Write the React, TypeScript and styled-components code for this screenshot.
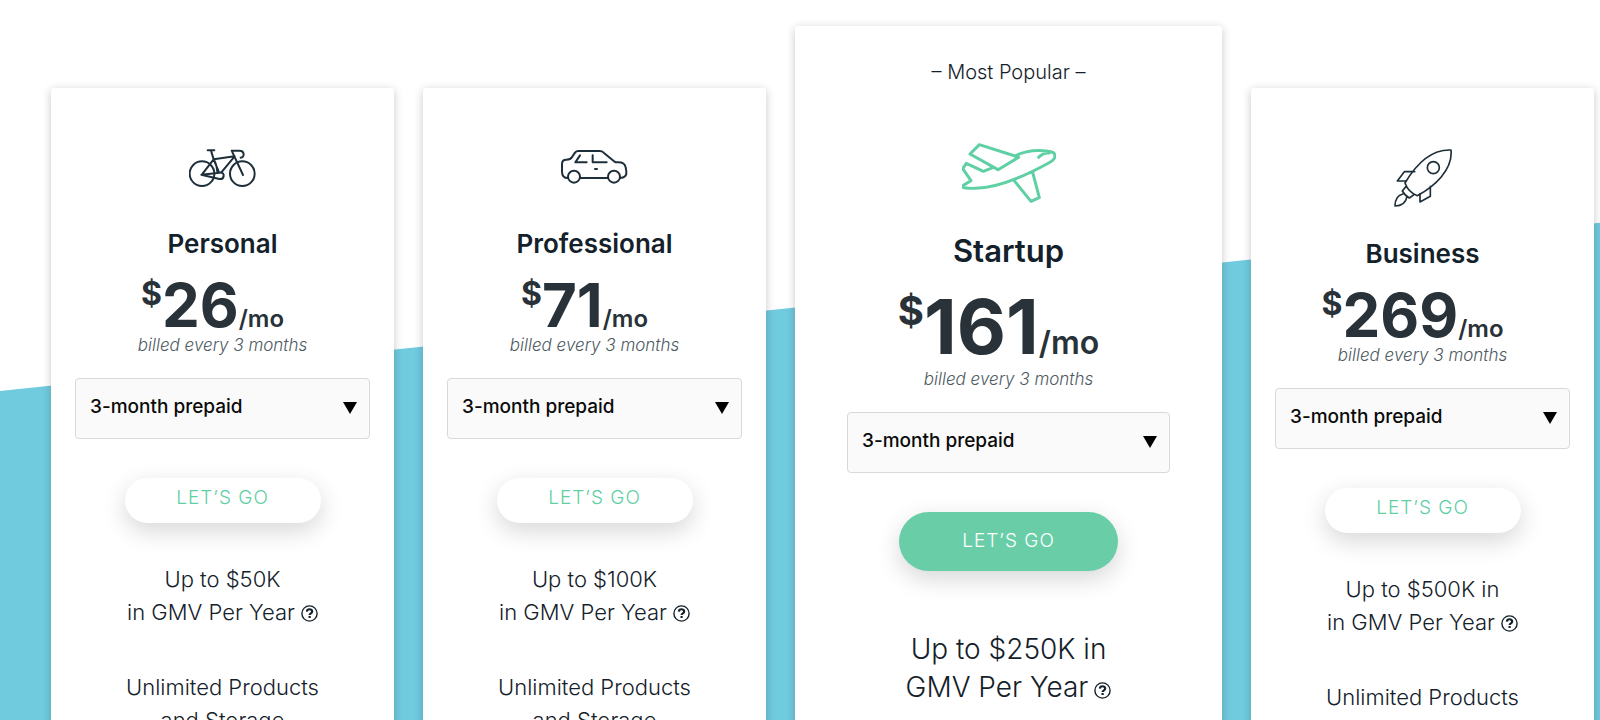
import React from "react";
import styled, { createGlobalStyle } from "styled-components";

const GlobalStyle = createGlobalStyle`
  *, *::before { box-sizing: border-box; }
  body {
    margin: 0;
    background: #fff;
    color: #14212a;
    font-family: Inter, "Open Sans", sans-serif;
  }
`;

const Page = styled.main`
  position: relative;
  height: 100vh;
  overflow: hidden;

  &::before {
    content: "";
    position: absolute;
    z-index: -1;
    top: 391px;
    left: 0;
    right: 0;
    height: 200vh;
    background: #70cbdf;
    transform: skewY(-6deg);
    transform-origin: left top;
  }
`;

const Plans = styled.div`
  display: grid;
  grid-template-columns: 343fr 343fr 427fr 343fr;
  gap: 29px;
  align-items: start;
  padding: 26px 6px 0 51px;
`;

const Card = styled.section<{ $featured?: boolean }>`
  display: flex;
  flex-direction: column;
  align-items: center;
  margin-top: ${(p) => (p.$featured ? 0 : 62)}px;
  padding: ${(p) => (p.$featured ? "32px 52px 60px" : "61px 24px 60px")};
  background: #fff;
  border-radius: 3px;
  box-shadow: 0 2px 10px rgba(0, 0, 0, 0.22);
  text-align: center;
`;

const Badge = styled.p`
  margin: 0 0 57px;
  font-size: 20px;
  font-weight: 300;
  line-height: 28px;
`;

const IconBox = styled.div<{ $height: number }>`
  height: ${(p) => p.$height}px;
  margin-bottom: 31px;

  svg {
    display: block;
    fill: none;
    stroke: #1d2f3a;
    stroke-linecap: round;
    stroke-linejoin: round;
  }
`;

const Title = styled.h2<{ $featured?: boolean }>`
  margin: 0 0 ${(p) => (p.$featured ? 23 : 17)}px;
  font-size: ${(p) => (p.$featured ? 31 : 26)}px;
  font-weight: 600;
  line-height: 32px;
`;

const Price = styled.p<{ $featured?: boolean }>`
  display: flex;
  align-items: baseline;
  margin: 0 0 ${(p) => (p.$featured ? 5 : 0)}px;
  padding-right: 20px;
  color: #283238;
  font-size: ${(p) => (p.$featured ? 76 : 60)}px;
  font-weight: 700;
  line-height: ${(p) => (p.$featured ? 72 : 56)}px;
`;

const Currency = styled.span<{ $featured?: boolean }>`
  align-self: flex-start;
  font-size: ${(p) => (p.$featured ? 40 : 32)}px;
  line-height: ${(p) => (p.$featured ? 42 : 34)}px;
`;

const Period = styled.span<{ $featured?: boolean }>`
  font-size: ${(p) => (p.$featured ? 32 : 24)}px;
  font-weight: 600;
  line-height: 28px;
`;

const Billing = styled.p`
  margin: 0 0 21px;
  color: #4d5a62;
  font-size: 17px;
  font-style: italic;
  font-weight: 300;
  line-height: 24px;
`;

const SelectWrap = styled.div`
  position: relative;
  width: 100%;
  margin-bottom: 39px;

  &::after {
    content: "";
    position: absolute;
    top: 24px;
    right: 13px;
    border: 7px solid transparent;
    border-top: 12px solid #000;
    border-bottom: 0;
    pointer-events: none;
  }
`;

const Select = styled.select`
  display: block;
  width: 100%;
  height: 61px;
  padding: 0 36px 4px 14px;
  appearance: none;
  background: #fafafa;
  border: 1px solid #d9d9d9;
  border-radius: 4px;
  color: #0a0a0a;
  font-family: inherit;
  font-size: 19px;
  font-weight: 500;
`;

const Button = styled.button<{ $featured?: boolean }>`
  width: ${(p) => (p.$featured ? 219 : 196)}px;
  height: ${(p) => (p.$featured ? 59 : 45)}px;
  margin-bottom: ${(p) => (p.$featured ? 59 : 40)}px;
  padding: 0 0 ${(p) => (p.$featured ? 3 : 6)}px;
  background: ${(p) => (p.$featured ? "#69cea8" : "#fff")};
  border: 0;
  border-radius: 30px;
  box-shadow: 0 8px 24px rgba(0, 0, 0, 0.16);
  color: ${(p) => (p.$featured ? "#fff" : "#5fcfa4")};
  font-family: inherit;
  font-size: 19px;
  font-weight: 300;
  letter-spacing: 1px;
`;

const Features = styled.ul<{ $featured?: boolean }>`
  display: grid;
  gap: 42px;
  margin: 0;
  padding: 0;
  list-style: none;
  font-size: ${(p) => (p.$featured ? 28 : 22)}px;
  font-weight: 300;
  line-height: ${(p) => (p.$featured ? 38 : 33)}px;
`;

const Line = styled.span`
  display: flex;
  align-items: center;
  justify-content: center;
  gap: 6px;
`;

const HelpButton = styled.button<{ $featured?: boolean }>`
  display: block;
  padding: ${(p) => (p.$featured ? 6 : 1)}px 0 0;
  background: none;
  border: 0;
  color: inherit;

  svg {
    display: block;
  }
`;

const BikeIcon = () => (
  <svg width="67" height="38" viewBox="567 237 201 114" strokeWidth="6" aria-hidden="true">
    <circle cx="606" cy="311" r="37" />
    <circle cx="727" cy="311" r="37" />
    <path d="M623 241h20M633 242l8 26 16 39M641 268l63-9M704 259l-40 48M606 313l35-45q9 14 11 38M604 314l55-6c9-1 13 4 12 10-1 7-5 10-13 9zM695 242h23c17 0 16 21 4 21M695 242l34 73" />
  </svg>
);

const CarIcon = () => (
  <svg width="67" height="38" viewBox="423 89 201 114" strokeWidth="6" aria-hidden="true">
    <circle cx="462" cy="172" r="18" />
    <circle cx="582" cy="172" r="18" />
    <path d="M444 176c-12 0-18-7-18-19v-23c0-9 5-13 13-13 10 0 14-2 18-9l8-12c3-4 6-5 10-5h64c5 0 8 1 12 5l33 27c4 3 6 2 11 2 12 0 20 5 22 15l2 12c2 13-6 19-19 20M480 176h84M480 108l-14 21h34M518 108v21h42M525 149h6" />
  </svg>
);

const PlaneIcon = () => (
  <svg width="94" height="60" viewBox="546 400 282 180" strokeWidth="9" style={{ stroke: "#5fcfa4" }} aria-hidden="true">
    <path d="M705 439L598 405l-28 28 84 47 62-37-11-4c28-14 65-19 100-14 27 3 26 22 1 35-80 44-160 75-220 76-42 1-45-4-31-12l18-11-25-36 11-16 51 24 30-12M776 443c8-9 18-14 32-13M700 510l53 65 25-11-20-76" />
  </svg>
);

const RocketIcon = () => (
  <svg width="58" height="58" viewBox="522 237 174 174" strokeWidth="5" aria-hidden="true">
    <circle cx="640" cy="293" r="18" />
    <path d="M693 240c-65-3-109 50-138 99 6 17 18 31 37 38 52-28 107-78 101-137zM584 305h-31l-21 28h25M600 371v25l31-17v-30M559 348l-12 15c5 9 12 16 21 21l15-11M549 372c-18 4-24 18-24 36 19 0 32-7 36-28" />
  </svg>
);

const HelpIcon = () => (
  <svg width="17" height="17" viewBox="0 0 17 17" fill="none" stroke="currentColor" aria-hidden="true">
    <circle cx="8.5" cy="8.5" r="7.6" strokeWidth="1.4" />
    <path d="M5.900 6.600c.1-3.100 5.300-3.100 5.300-.1 0 1.900-2.600 1.700-2.600 3.500M8.600 11.100v2" strokeWidth="2.200" />
  </svg>
);

interface Plan {
  id: string;
  name: string;
  price: number;
  icon: React.ReactNode;
  iconHeight: number;
  limit: [string, string];
  featured?: boolean;
}

const plans: Plan[] = [
  { id: "personal", name: "Personal", price: 26, icon: <BikeIcon />, iconHeight: 48, limit: ["Up to $50K", "in GMV Per Year"] },
  { id: "professional", name: "Professional", price: 71, icon: <CarIcon />, iconHeight: 48, limit: ["Up to $100K", "in GMV Per Year"] },
  { id: "startup", name: "Startup", price: 161, icon: <PlaneIcon />, iconHeight: 61, limit: ["Up to $250K in", "GMV Per Year"], featured: true },
  { id: "business", name: "Business", price: 269, icon: <RocketIcon />, iconHeight: 58, limit: ["Up to $500K in", "in GMV Per Year"] },
];

const PlanCard = ({ plan }: { plan: Plan }) => (
  <Card $featured={plan.featured} aria-labelledby={plan.id}>
    {plan.featured && <Badge>– Most Popular –</Badge>}
    <IconBox $height={plan.iconHeight}>{plan.icon}</IconBox>
    <Title id={plan.id} $featured={plan.featured}>{plan.name}</Title>
    <Price $featured={plan.featured}>
      <Currency $featured={plan.featured}>$</Currency>
      {plan.price}
      <Period $featured={plan.featured}>/mo</Period>
    </Price>
    <Billing>billed every 3 months</Billing>
    <SelectWrap>
      <Select aria-label={`${plan.name} billing term`}>
        <option>3-month prepaid</option>
      </Select>
    </SelectWrap>
    <Button type="button" $featured={plan.featured}>LET’S GO</Button>
    <Features $featured={plan.featured}>
      <li>
        <Line>{plan.limit[0]}</Line>
        <Line>
          {plan.limit[1]}
          <HelpButton type="button" $featured={plan.featured} aria-label="About GMV">
            <HelpIcon />
          </HelpButton>
        </Line>
      </li>
      {!plan.featured && (
        <li>
          <Line>Unlimited Products</Line>
          <Line>and Storage</Line>
        </li>
      )}
    </Features>
  </Card>
);

export default function App() {
  return (
    <>
      <GlobalStyle />
      <Page>
        <Plans>
          {plans.map((plan) => (
            <PlanCard key={plan.id} plan={plan} />
          ))}
        </Plans>
      </Page>
    </>
  );
}
